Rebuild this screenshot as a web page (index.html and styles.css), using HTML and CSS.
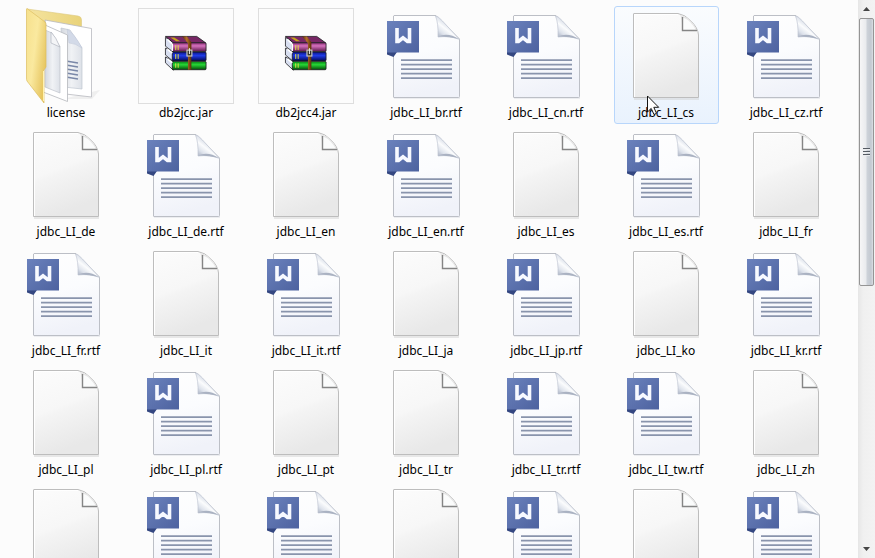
FILE: index.html
```
<!DOCTYPE html>
<html lang="en">
<head>
<meta charset="utf-8">
<title>Files</title>
<link rel="stylesheet" href="styles.css">
</head>
<body>
<svg class="defs" aria-hidden="true">
  <defs>
    <linearGradient id="gPage" x1="0" y1="0" x2="0.3" y2="1"><stop offset="0" stop-color="#fcfcfc"/><stop offset="0.5" stop-color="#f7f7f7"/><stop offset="0.56" stop-color="#f4f4f4"/><stop offset="1" stop-color="#e8e8e8"/></linearGradient>
    <linearGradient id="gDoc" x1="0" y1="0" x2="0.2" y2="1"><stop offset="0" stop-color="#fefefe"/><stop offset="0.5" stop-color="#fbfcfe"/><stop offset="1" stop-color="#f0f2f9"/></linearGradient>
    <linearGradient id="gBadge" x1="0" y1="0" x2="1" y2="1"><stop offset="0" stop-color="#6b82bd"/><stop offset="1" stop-color="#4d629f"/></linearGradient>
    <linearGradient id="gFold" gradientUnits="userSpaceOnUse" x1="72" y1="17" x2="62" y2="30"><stop offset="0" stop-color="#d5dbe6"/><stop offset="0.35" stop-color="#fbfcfd"/><stop offset="0.7" stop-color="#dde2eb"/><stop offset="1" stop-color="#aeb6c6"/></linearGradient>
    <linearGradient id="gFolder" x1="0" y1="0" x2="1" y2="0.6"><stop offset="0" stop-color="#f6e08c"/><stop offset="0.5" stop-color="#fae99f"/><stop offset="1" stop-color="#e6c560"/></linearGradient>
    <linearGradient id="gBack" x1="0" y1="0" x2="1" y2="0"><stop offset="0" stop-color="#f5e4a0"/><stop offset="1" stop-color="#e9d37a"/></linearGradient>
    <linearGradient id="gSheet" x1="0" y1="0" x2="1" y2="0"><stop offset="0" stop-color="#d4d8df"/><stop offset="0.5" stop-color="#f0f2f5"/><stop offset="1" stop-color="#dde1e8"/></linearGradient>
    <linearGradient id="gPurple" x1="0" y1="0" x2="0" y2="1"><stop offset="0" stop-color="#8c2f77"/><stop offset="0.35" stop-color="#d572bd"/><stop offset="1" stop-color="#5a164a"/></linearGradient>
    <linearGradient id="gBlue" x1="0" y1="0" x2="0" y2="1"><stop offset="0" stop-color="#0b168d"/><stop offset="0.4" stop-color="#203be8"/><stop offset="1" stop-color="#030856"/></linearGradient>
    <linearGradient id="gGreen" x1="0" y1="0" x2="0" y2="1"><stop offset="0" stop-color="#078214"/><stop offset="0.4" stop-color="#27d636"/><stop offset="1" stop-color="#034b08"/></linearGradient>
    <linearGradient id="gBelt" x1="0" y1="0" x2="1" y2="0"><stop offset="0" stop-color="#4e2c08"/><stop offset="0.5" stop-color="#b8712a"/><stop offset="1" stop-color="#563009"/></linearGradient>

    <symbol id="blank" viewBox="0 0 96 96">
      <path d="M16 91H81" stroke="#d2d2d2" fill="none"/>
      <path d="M16 5.500H60Q67 6.500 73 13Q80 20 80.500 27V89.500H15.500V6Q15.500 5.500 16 5.500Z" fill="url(#gPage)" stroke="#bdbdbd"/>
      <path d="M16.500 89V6.500H60" fill="none" stroke="#ffffff"/>
      <path d="M62 7Q64 9 64 23H79L80 26Q79 20 73 13Q68 8 62 7Z" fill="#e6e6e6"/>
      <path d="M65 10V22H78Q75 17 72 14Q68 10 65 10Z" fill="#fbfcfc"/>
      <path d="M64.500 9V22.500H79" fill="none" stroke="#858585" stroke-width="1.400"/>
    </symbol>

    <symbol id="doc" viewBox="0 0 96 96">
      <path d="M16 90H82" stroke="#dcdee4" fill="none"/>
      <path d="M16 7.500H58L81.500 31V88.500Q81.500 89.500 80.500 89.500H16Q15.500 89.500 15.500 89V8Z" fill="url(#gDoc)" stroke="#bcbfc6"/>
      <path d="M57.500 8Q60.500 15 60 29Q72 27.500 81.500 31.500L64.500 13Q60 8 57.500 8Z" fill="url(#gFold)" stroke="#c0c6d2" stroke-width="0.700"/>
      <path d="M60 28.500Q70 24 81 31Q70 28 60 28.500Z" fill="#aab2c2"/>
      <path d="M9 44H19L15.500 49L9 46.500Z" fill="#344781"/>
      <rect x="9" y="13" width="32" height="31.500" fill="url(#gBadge)"/>
      <path d="M19 20V33.500H20.500L25 29.800L29.500 33.500H31.500V20" fill="none" stroke="#f7f9ff" stroke-width="3.600"/>
      <path d="M23 52.500H74M23 57H74M23 61.500H74M23 66H74M23 70.500H74" fill="none" stroke="#8994ac" stroke-width="1.800" transform="translate(0 -0.300)"/>
    </symbol>

    <symbol id="folder" viewBox="0 0 96 96">
      <path d="M45 91L82 82L74 91Z" fill="#d6d6d6" opacity="0.350"/>
      <path d="M9 1L60 8Q63.500 8.500 63.500 12V60L22 60Z" fill="url(#gBack)" stroke="#dbc77e" stroke-width="0.600"/>
      <path d="M27 12L73.500 20.500V89L39 85Z" fill="#ffffff" stroke="#b7b9bf" stroke-width="0.800"/>
      <path d="M43 20L52 22L64 40V81L46 79Z" fill="url(#gSheet)" stroke="#bfc5d0" stroke-width="0.700"/>
      <path d="M49 21Q56 25 64 40Q57 35 51 35Z" fill="#d3dae8" stroke="#bdc5d6" stroke-width="0.500"/>
      <path d="M48 53L60 55M48 57L60 59M48 61L60 63M48 65L60 67M48 69L60 71" stroke="#7a88a8" stroke-width="1.300"/>
      <path d="M27 17L49.500 27V93.500L25 84Z" fill="#fff" stroke="#b5b7bc" stroke-width="0.800"/>
      <path d="M27 22L34 25L42 39V85L27 79Z" fill="url(#gSheet)" stroke="#bdc1ca" stroke-width="0.700"/>
      <path d="M33 24Q38 29 42 39L33 35Z" fill="#f4f5f7" stroke="#b0b5bf" stroke-width="0.700"/>
      <path d="M9 0.500L27 14Q28 15 28 17V59L26 62V95L9 73Q8.500 72 8.500 70V1.500Q8.500 0.500 9 0.500Z" fill="url(#gFolder)" stroke="#dcbd60" stroke-width="0.700"/>
      <path d="M25.500 63V93" stroke="#fff2b0"/>
    </symbol>

    <symbol id="archive" viewBox="0 0 96 96">
      <g stroke="#19191f" stroke-width="0.800">
        <path d="M27 49L35 53.500V62.500L27 55Z" fill="#d8dff0"/>
        <path d="M27 40L35 43.500V53.500L27 47Z" fill="#d8dff0"/>
        <path d="M27 29L35 34V44L27 38Z" fill="#d8dff0"/>
        <path d="M27 28H59L68 34.500H35Z" fill="#782765"/>
        <rect x="34" y="34.500" width="34.500" height="9" rx="1" fill="url(#gPurple)"/>
        <rect x="34" y="44" width="34.500" height="9" rx="1" fill="url(#gBlue)"/>
        <rect x="34" y="53.500" width="34.500" height="8.500" rx="1" fill="url(#gGreen)"/>
      </g>
      <path d="M29 31L34 36V43M29 41L34 45M29 51L34 55" stroke="#fff" stroke-width="1.500" fill="none"/>
      <path d="M32 29H36L42 33H38Z" fill="#c4a51a"/>
      <path d="M37.500 37V42M40 37V42M37.500 46V51M40 46V51M37.500 55.500V60M40 55.500V60" stroke="#e3df43"/>
      <path d="M44 28H49L53.500 34V62H50V35Z" fill="url(#gBelt)"/>
      <rect x="49" y="42" width="5" height="6" fill="#30302a" stroke="#c9c9c0" stroke-width="1.200"/>
      <path d="M51.500 40V46" stroke="#eee"/>
    </symbol>
  </defs>
</svg>
<div class="window">
  <main class="files">
    <button class="file"><svg class="icon"><use href="#folder"/></svg><span>license</span></button>
    <button class="file"><svg class="icon framed"><use href="#archive"/></svg><span>db2jcc.jar</span></button>
    <button class="file"><svg class="icon framed"><use href="#archive"/></svg><span>db2jcc4.jar</span></button>
    <button class="file"><svg class="icon"><use href="#doc"/></svg><span>jdbc_LI_br.rtf</span></button>
    <button class="file"><svg class="icon"><use href="#doc"/></svg><span>jdbc_LI_cn.rtf</span></button>
    <button class="file hovered"><svg class="icon"><use href="#blank"/></svg><span>jdbc_LI_cs</span>
      <svg class="pointer" viewBox="0 0 13 21" aria-hidden="true"><path d="M0.500 1V17L4.200 13.400L7 19.500L9.500 18.300L6.800 12.300H11.700Z" fill="#fff" stroke="#151515"/></svg></button>
    <button class="file"><svg class="icon"><use href="#doc"/></svg><span>jdbc_LI_cz.rtf</span></button>

    <button class="file"><svg class="icon"><use href="#blank"/></svg><span>jdbc_LI_de</span></button>
    <button class="file"><svg class="icon"><use href="#doc"/></svg><span>jdbc_LI_de.rtf</span></button>
    <button class="file"><svg class="icon"><use href="#blank"/></svg><span>jdbc_LI_en</span></button>
    <button class="file"><svg class="icon"><use href="#doc"/></svg><span>jdbc_LI_en.rtf</span></button>
    <button class="file"><svg class="icon"><use href="#blank"/></svg><span>jdbc_LI_es</span></button>
    <button class="file"><svg class="icon"><use href="#doc"/></svg><span>jdbc_LI_es.rtf</span></button>
    <button class="file"><svg class="icon"><use href="#blank"/></svg><span>jdbc_LI_fr</span></button>

    <button class="file"><svg class="icon"><use href="#doc"/></svg><span>jdbc_LI_fr.rtf</span></button>
    <button class="file"><svg class="icon"><use href="#blank"/></svg><span>jdbc_LI_it</span></button>
    <button class="file"><svg class="icon"><use href="#doc"/></svg><span>jdbc_LI_it.rtf</span></button>
    <button class="file"><svg class="icon"><use href="#blank"/></svg><span>jdbc_LI_ja</span></button>
    <button class="file"><svg class="icon"><use href="#doc"/></svg><span>jdbc_LI_jp.rtf</span></button>
    <button class="file"><svg class="icon"><use href="#blank"/></svg><span>jdbc_LI_ko</span></button>
    <button class="file"><svg class="icon"><use href="#doc"/></svg><span>jdbc_LI_kr.rtf</span></button>

    <button class="file"><svg class="icon"><use href="#blank"/></svg><span>jdbc_LI_pl</span></button>
    <button class="file"><svg class="icon"><use href="#doc"/></svg><span>jdbc_LI_pl.rtf</span></button>
    <button class="file"><svg class="icon"><use href="#blank"/></svg><span>jdbc_LI_pt</span></button>
    <button class="file"><svg class="icon"><use href="#blank"/></svg><span>jdbc_LI_tr</span></button>
    <button class="file"><svg class="icon"><use href="#doc"/></svg><span>jdbc_LI_tr.rtf</span></button>
    <button class="file"><svg class="icon"><use href="#doc"/></svg><span>jdbc_LI_tw.rtf</span></button>
    <button class="file"><svg class="icon"><use href="#blank"/></svg><span>jdbc_LI_zh</span></button>

    <button class="file" aria-label="File"><svg class="icon"><use href="#blank"/></svg></button>
    <button class="file" aria-label="Document"><svg class="icon"><use href="#doc"/></svg></button>
    <button class="file" aria-label="Document"><svg class="icon"><use href="#doc"/></svg></button>
    <button class="file" aria-label="File"><svg class="icon"><use href="#blank"/></svg></button>
    <button class="file" aria-label="Document"><svg class="icon"><use href="#doc"/></svg></button>
    <button class="file" aria-label="File"><svg class="icon"><use href="#blank"/></svg></button>
    <button class="file" aria-label="Document"><svg class="icon"><use href="#doc"/></svg></button>
  </main>
  <div class="scrollbar">
    <button class="arrow" aria-label="Scroll up"><svg viewBox="0 0 7 4"><path d="M0 4L3.500 0L7 4Z"/></svg></button>
    <div class="track"><div class="thumb"><i></i><i></i><i></i></div></div>
    <button class="arrow" aria-label="Scroll down"><svg viewBox="0 0 7 4"><path d="M0 0L3.500 4L7 0Z"/></svg></button>
  </div>
</div>
</body>
</html>
```

FILE: styles.css
```
* { box-sizing: border-box; }

body {
  margin: 0;
  background: #fcfcfc;
  color: #000;
  font: 12px/18px "Noto Sans", "Open Sans", sans-serif;
}

.defs { position: absolute; width: 0; height: 0; }

.window {
  display: flex;
  height: 100vh;
  overflow: hidden;
}

.files {
  flex: 1;
  display: grid;
  grid-template-columns: repeat(auto-fill, 120px);
  grid-auto-rows: 118px;
  row-gap: 1px;
  align-content: start;
  justify-items: center;
  padding: 6px;
  overflow: hidden;
}

.file {
  position: relative;
  display: flex;
  flex-direction: column;
  align-items: center;
  justify-content: flex-start;
  width: 105px;
  padding: 1px 0 0;
  border: 1px solid transparent;
  border-radius: 3px;
  background: none;
  color: inherit;
  font: inherit;
}

.hovered {
  border-color: #b8d6fb;
  background: linear-gradient(#fafcfe, #e9f2fd);
}

.icon { flex: none; width: 96px; height: 96px; }

.framed { border: 1px solid #dedede; }

.pointer {
  position: absolute;
  left: 32px;
  top: 88px;
  width: 13px;
  height: 21px;
}

.scrollbar {
  flex: none;
  display: flex;
  flex-direction: column;
  width: 17px;
  padding: 0 1px;
  background: linear-gradient(90deg, #e6e6e6, #f0f0f0 30%, #f3f3f3);
}

.arrow {
  display: flex;
  align-items: center;
  justify-content: center;
  height: 18px;
  padding: 0;
  border: 0;
  background: none;
}

.arrow svg { width: 7px; height: 4px; fill: #454545; }

.track { flex: 1; }

.thumb {
  display: flex;
  flex-direction: column;
  align-items: center;
  justify-content: center;
  gap: 1px;
  height: 51.4%;
  border: 1px solid #959595;
  border-radius: 2px;
  background: linear-gradient(90deg, #f6f6f7, #e9ebee 45%, #cdd2d9 55%, #c3c9d1 85%, #dcdfe4);
}

.thumb i {
  width: 7px;
  height: 2px;
  border-top: 1px solid #555b63;
  background: #e9ebee;
}
```
